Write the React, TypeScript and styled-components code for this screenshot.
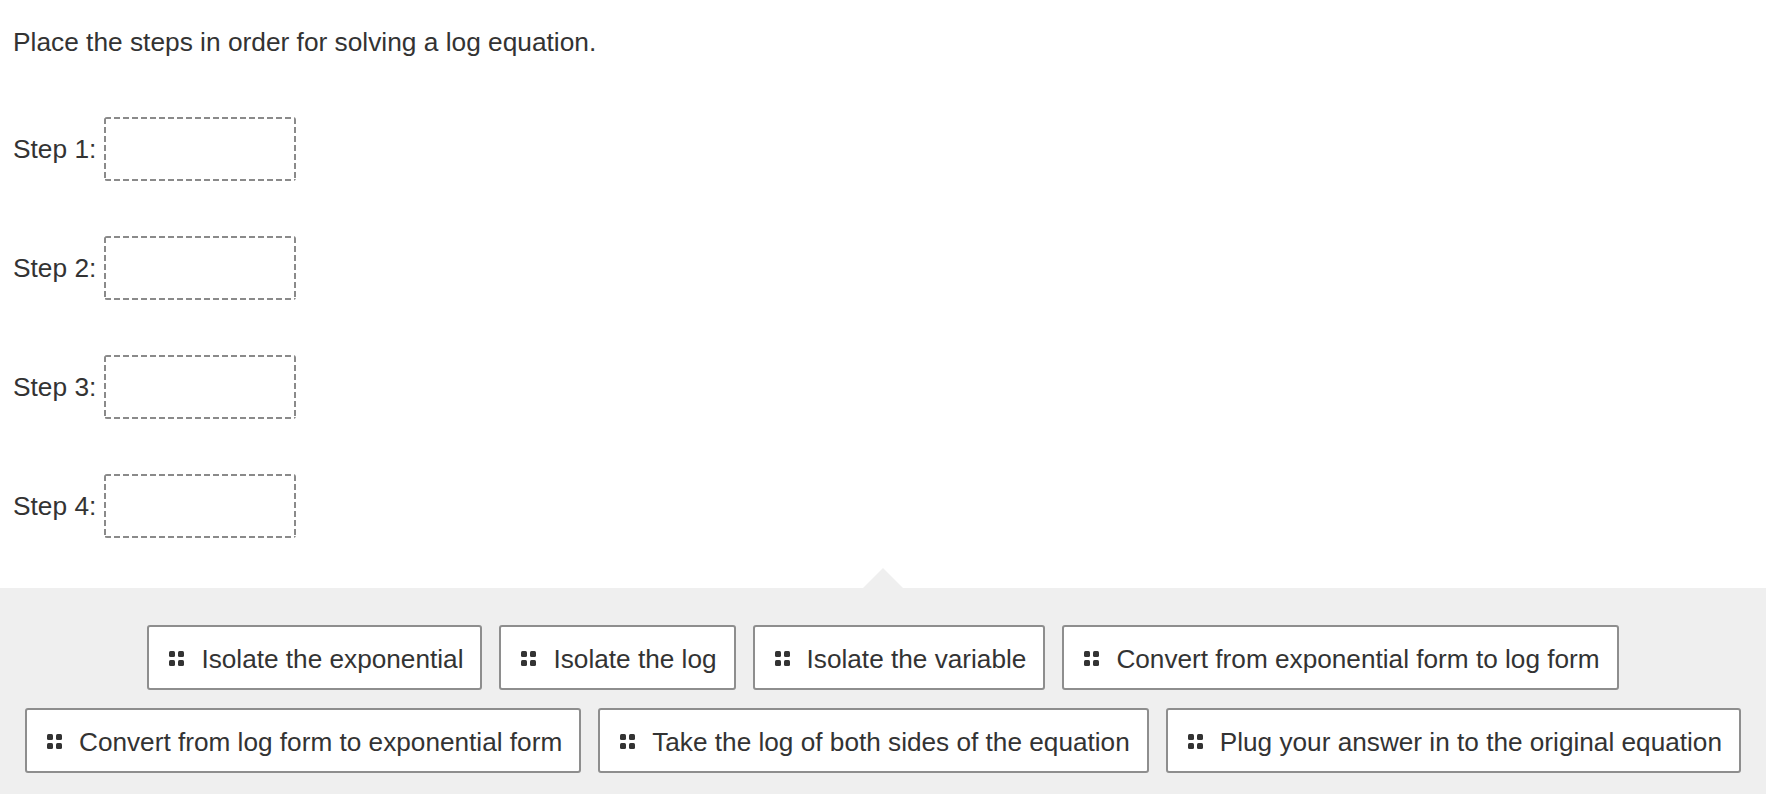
import styled, { createGlobalStyle } from "styled-components";

const GlobalStyle = createGlobalStyle`
    html, body {
        margin: 0;
        padding: 0;
        background: #ffffff;
    }
    body {
        font-family: "Liberation Sans", Arial, Helvetica, sans-serif;
        color: #333333;
    }
`;

const Page = styled.div`
    min-height: 794px;
    display: flex;
    flex-direction: column;
`;

const Question = styled.div`
    padding: 27px 13px 0 13px;
`;

const Prompt = styled.p`
    margin: 0;
    font-size: 26.3px;
    line-height: 30px;
`;

const Steps = styled.div`
    display: flex;
    flex-direction: column;
    gap: 55px;
    margin-top: 60px;
    padding-bottom: 50px;
`;

const StepRow = styled.div`
    display: flex;
    align-items: center;
    gap: 8px;
`;

const StepLabel = styled.span`
    font-size: 26.3px;
    line-height: 30px;
`;

// dashes drawn with gradients: 6px dash, 3px gap, like the original
const dash = "#8a8a8a";

const DropZone = styled.div`
    width: 192px;
    height: 64px;
    border-radius: 3px;
    background-color: #ffffff;
    background-image:
        linear-gradient(90deg, ${dash} 6px, transparent 6px),
        linear-gradient(90deg, ${dash} 6px, transparent 6px),
        linear-gradient(180deg, ${dash} 6px, transparent 6px),
        linear-gradient(180deg, ${dash} 6px, transparent 6px);
    background-size: 9px 2px, 9px 2px, 2px 9px, 2px 9px;
    background-position: 1px 0, 1px 100%, 0 1px, 100% 1px;
    background-repeat: repeat-x, repeat-x, repeat-y, repeat-y;
`;

const Pool = styled.div`
    position: relative;
    flex: 1;
    background: #efefef;
    padding: 37px 10px 20px;
    display: flex;
    flex-wrap: wrap;
    justify-content: center;
    align-content: flex-start;
    gap: 18px 17px;

    &::before {
        content: "";
        position: absolute;
        top: -20px;
        left: 50%;
        margin-left: -20px;
        border-left: 20px solid transparent;
        border-right: 20px solid transparent;
        border-bottom: 20px solid #efefef;
    }
`;

const Choice = styled.div`
    display: flex;
    align-items: center;
    gap: 17px;
    height: 65px;
    box-sizing: border-box;
    padding: 2px 17px 0 20px;
    background: #ffffff;
    border: 2px solid #8e8e8e;
    border-radius: 3px;
    font-size: 26.2px;
    line-height: 30px;
    white-space: nowrap;
    cursor: move;
`;

const Grip = styled.span`
    display: grid;
    grid-template-columns: repeat(2, 6px);
    grid-template-rows: repeat(2, 6px);
    gap: 3px;
    flex-shrink: 0;
    margin-top: -1px;
`;

const Dot = styled.span`
    background: #333333;
    border-radius: 1.5px;
`;

const steps = ["Step 1:", "Step 2:", "Step 3:", "Step 4:"];

const choices = [
    "Isolate the exponential",
    "Isolate the log",
    "Isolate the variable",
    "Convert from exponential form to log form",
    "Convert from log form to exponential form",
    "Take the log of both sides of the equation",
    "Plug your answer in to the original equation",
];

function App() {
    return (
        <>
            <GlobalStyle />
            <Page>
                <Question>
                    <Prompt>Place the steps in order for solving a log equation.</Prompt>
                    <Steps>
                        {steps.map(step => (
                            <StepRow key={step}>
                                <StepLabel>{step}</StepLabel>
                                <DropZone />
                            </StepRow>
                        ))}
                    </Steps>
                </Question>
                <Pool>
                    {choices.map(choice => (
                        <Choice key={choice}>
                            <Grip>
                                <Dot />
                                <Dot />
                                <Dot />
                                <Dot />
                            </Grip>
                            {choice}
                        </Choice>
                    ))}
                </Pool>
            </Page>
        </>
    );
}

export default App;
